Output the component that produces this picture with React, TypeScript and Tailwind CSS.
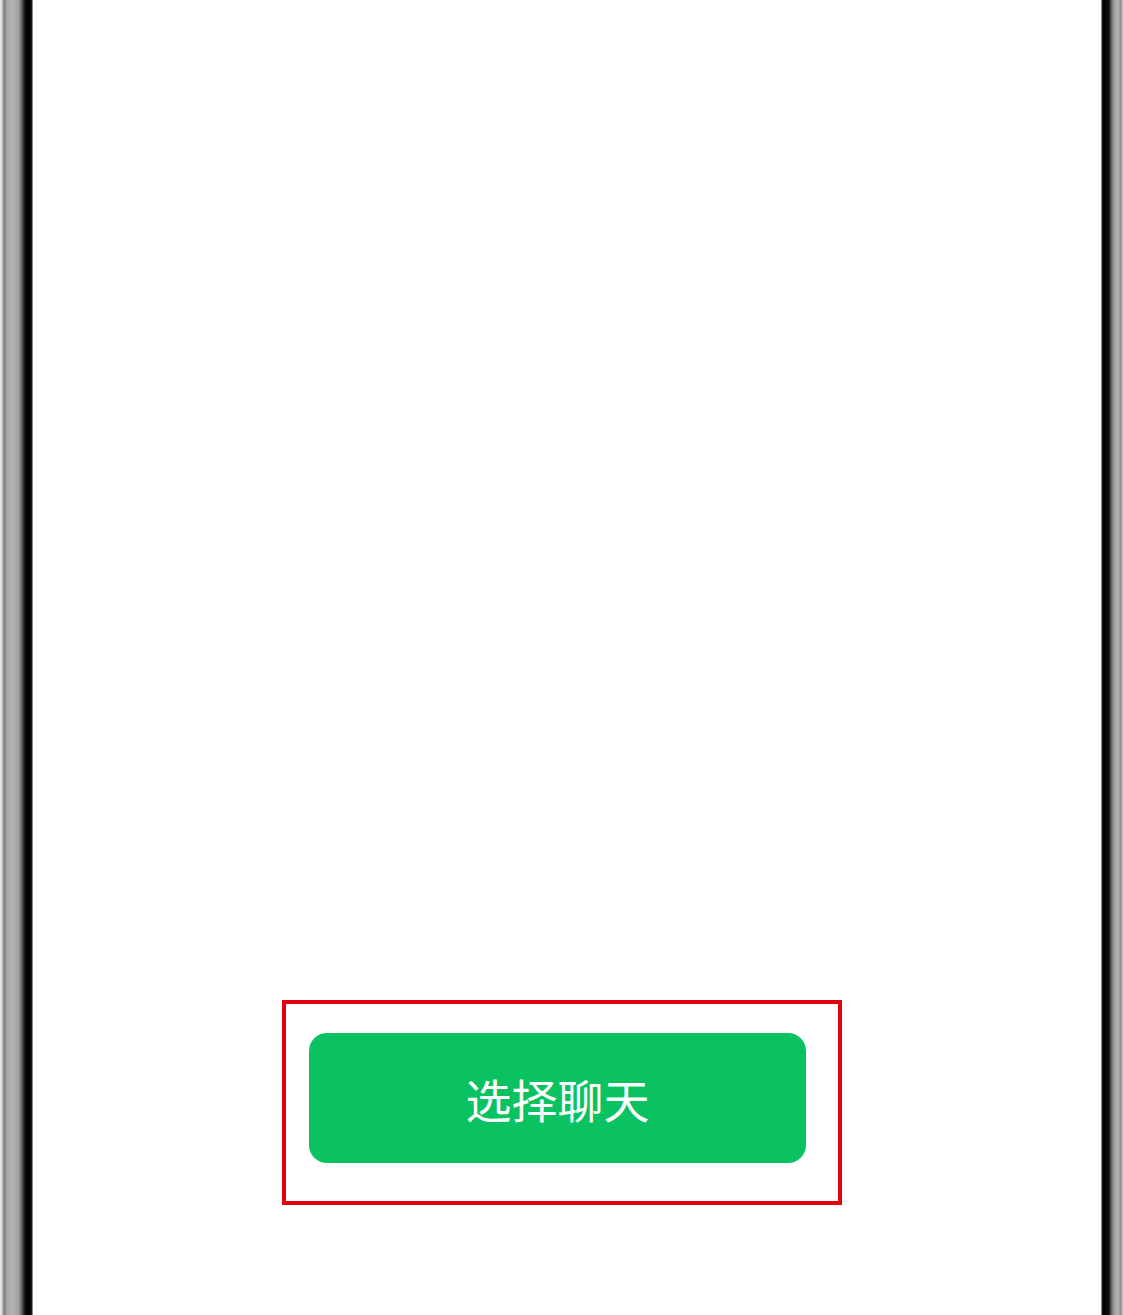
export default function App() {
  return (
    <div className="flex h-[1315px] w-[1123px] overflow-hidden bg-white font-['Noto_Sans_CJK_SC',sans-serif]">
      {/* left phone bezel */}
      <div className="h-full w-[33px] shrink-0 bg-[linear-gradient(to_right,#f0f0f0_0px,#d0d0d0_2px,#7a7a7a_4px,#a8a8a8_7px,#b4b4b4_13px,#9c9c9c_19px,#5a5a5a_22px,#0c0c14_25px,#000_29px,#1a1a22_32px,#f4f4f4_33px)]" />

      {/* screen */}
      <div className="flex flex-1 flex-col justify-end pb-[110px]">
        <div className="ml-[249px] h-[205px] w-[560px] border-4 border-[#e3000f] pl-[23px] pt-[29px]">
          <button className="flex h-[130px] w-[497px] items-center justify-center rounded-[18px] bg-[#0ac262] text-[46px] leading-none text-white">
            选择聊天
          </button>
        </div>
      </div>

      {/* right phone bezel */}
      <div className="h-full w-[22px] shrink-0 bg-[linear-gradient(to_right,#f4f4f4_0px,#1a1a22_1px,#000_3px,#0c0c14_8px,#5a5a5a_10px,#9c9c9c_13px,#b4b4b4_17px,#8a8a8a_20px,#d8d8d8_22px)]" />
    </div>
  );
}
